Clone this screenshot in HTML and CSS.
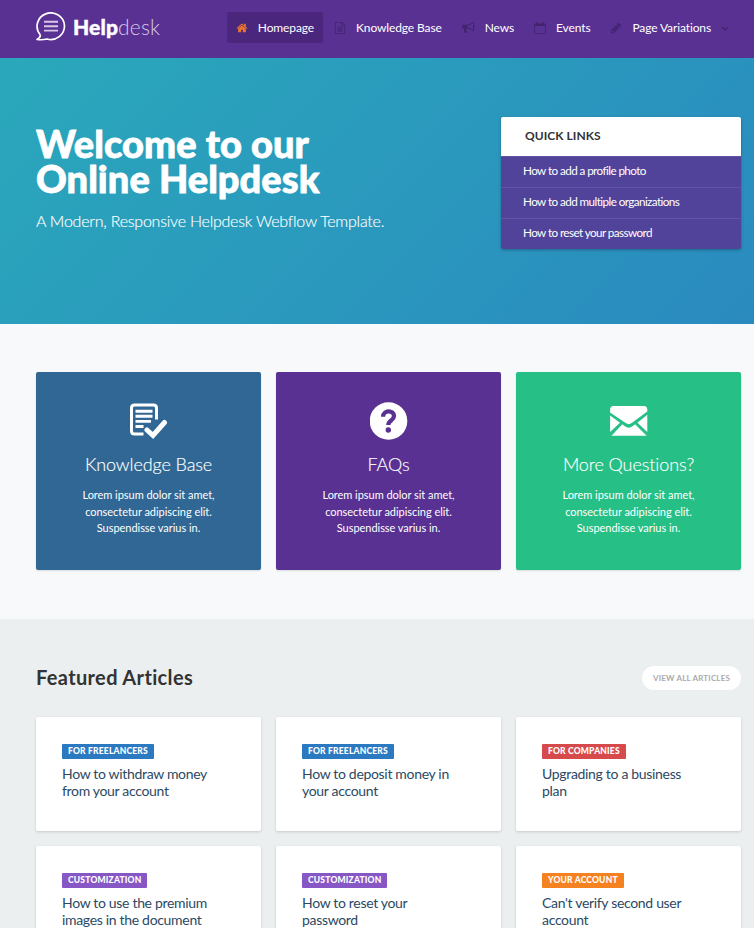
FILE: index.html
```html
<!DOCTYPE html>
<html lang="en">
<head>
<meta charset="utf-8">
<title>Helpdesk</title>
<link rel="stylesheet" href="styles.css">
</head>
<body>
<header class="navbar">
  <a class="logo">
    <svg class="logo-mark" viewBox="0 0 30 30"><path d="M4.300 22.800A13.700 13.300 0 1 1 11 27Q6.500 28.200 1 27.500Q4.700 25.500 4.300 22.800" fill="none" stroke="#fff" stroke-width="1.700" stroke-linejoin="round"/><path d="M8 9.700h14M8 14.200h14M8 18.600h14" stroke="#d6c8e6" stroke-width="1.900"/></svg>
    <span class="logo-text"><b>Help</b>desk</span>
  </a>
  <nav class="menu">
    <a class="menu-link active"><svg viewBox="0 0 1792 1792"><path d="M1472 992v480q0 26-19 45t-45 19h-384v-384h-256v384h-384q-26 0-45-19t-19-45v-480q0-1 .5-3t.5-3l575-474 575 474q1 2 1 6zm223-69l-62 74q-8 9-21 11h-3q-13 0-21-7l-692-577-692 577q-12 8-24 7-13-2-21-11l-62-74q-8-10-7-23.500t11-21.500l719-599q32-26 76-26t76 26l244 204v-195q0-14 9-23t23-9h192q14 0 23 9t9 23v408l219 182q10 8 11 21.500t-7 23.500z"/></svg><span>Homepage</span></a>
    <a class="menu-link"><svg viewBox="0 0 1792 1792"><path d="M1596 380q28 28 48 76t20 88v1152q0 40-28 68t-68 28h-1344q-40 0-68-28t-28-68v-1600q0-40 28-68t68-28h896q40 0 88 20t76 48zm-444-244v376h376q-10-29-22-41l-313-313q-12-12-41-22zm384 1528v-1024h-416q-40 0-68-28t-28-68v-416h-768v1536h1280zm-1024-864q0-14 9-23t23-9h704q14 0 23 9t9 23v64q0 14-9 23t-23 9h-704q-14 0-23-9t-9-23v-64zm736 224q14 0 23 9t9 23v64q0 14-9 23t-23 9h-704q-14 0-23-9t-9-23v-64q0-14 9-23t23-9h704zm0 256q14 0 23 9t9 23v64q0 14-9 23t-23 9h-704q-14 0-23-9t-9-23v-64q0-14 9-23t23-9h704z"/></svg><span>Knowledge Base</span></a>
    <a class="menu-link"><svg class="wide" viewBox="0 0 1792 1792"><path d="M1664 640q53 0 90.500 37.500t37.500 90.500-37.500 90.500-90.500 37.500v384q0 52-38 90t-90 38q-417-347-812-380-58 19-91 66t-31 100.500 40 92.500q-20 33-23 65.500t6 58 33.500 55 48 50 61.500 50.500q-29 58-111.500 83t-168.500 11.500-132-55.500q-7-23-29.500-87.500t-32-94.500-23-89-15-101 3.500-98.500 22-110.500h-122q-66 0-113-47t-47-113v-192q0-66 47-113t113-47h480q435 0 896-384 52 0 90 38t38 90v384zm-128 604v-954q-394 302-768 343v270q377 42 768 341z"/></svg><span>News</span></a>
    <a class="menu-link"><svg viewBox="0 0 12 12"><path fill-rule="evenodd" d="M.8 1.500H2.200V.3H4v1.200h4V.3h1.800v1.200h1.400q.6 0 .6.600v9q0 .6-.6.600H.8q-.6 0-.6-.6v-9q0-.6.600-.6zM1 4v6.900h10V4z"/></svg><span>Events</span></a>
    <a class="menu-link"><svg viewBox="0 0 1792 1792"><path d="M491 1536l91-91-235-235-91 91v107h128v128h107zm523-928q0-22-22-22-10 0-17 7l-542 542q-7 7-7 17 0 22 22 22 10 0 17-7l542-542q7-7 7-17zm-54-192l416 416-832 832h-416v-416zm683 96q0 53-37 90l-166 166-416-416 166-165q36-38 90-38 53 0 91 38l235 234q37 39 37 91z"/></svg><span>Page Variations</span><svg class="chevron" viewBox="0 0 8 6"><path d="M1 1l3 3 3-3" fill="none" stroke="#43246f" stroke-width="1.500"/></svg></a>
  </nav>
</header>

<section class="hero">
  <div class="hero-copy">
    <h1>Welcome to our<br>Online Helpdesk</h1>
    <p>A Modern, Responsive Helpdesk Webflow Template.</p>
  </div>
  <aside class="quick">
    <h2>QUICK LINKS</h2>
    <a>How to add a profile photo</a>
    <a>How to add multiple organizations</a>
    <a>How to reset your password</a>
  </aside>
</section>

<section class="services grid">
  <div class="service blue">
    <svg viewBox="0 0 38 38"><path d="M26.500 17.500V6q0-3-3-3H4.500Q1.500 3 1.500 6v23q0 3 3 3h9" fill="none" stroke="#fff" stroke-width="3"/><path d="M5.500 9.200h17M5.500 14.300h17M5.500 19.400h15.500M5.500 24.500h8" stroke="#fff" stroke-width="2.900"/><path d="M16.500 27.500l6.500 6L34.500 20.500" fill="none" stroke="#306794" stroke-width="8"/><path d="M17 28l6 5.500L34.500 20.500" fill="none" stroke="#fff" stroke-width="5" stroke-linecap="round"/></svg>
    <h3>Knowledge Base</h3>
    <p>Lorem ipsum dolor sit amet,<br>consectetur adipiscing elit.<br>Suspendisse varius in.</p>
  </div>
  <div class="service purple">
    <svg viewBox="0 0 38 38"><circle cx="18.500" cy="19" r="18.800" fill="#fff"/><path d="M13.100 14.700C13.100 7.700 24 7.900 24 14C24 18.200 18.300 18.500 18.300 23" fill="none" stroke="#593193" stroke-width="4.300"/><circle cx="18.300" cy="28" r="2.700" fill="#593193"/></svg>
    <h3>FAQs</h3>
    <p>Lorem ipsum dolor sit amet,<br>consectetur adipiscing elit.<br>Suspendisse varius in.</p>
  </div>
  <div class="service green">
    <svg viewBox="0 0 38 38"><g fill="#fff"><path d="M3.700 4h30q3.600 0 3.600 3.600v1.900L21.700 21q-3 2.300-6 0L.1 10.500V7.600Q.1 4 3.700 4z"/><path d="M.1 13.500L10 20.700.1 30zM37.300 12.700V30L27.400 20.700zM12.300 22.300l2.600 2q3.800 2.700 7.600 0l2.600-2L36.700 33.800H1.500z"/></g></svg>
    <h3>More Questions?</h3>
    <p>Lorem ipsum dolor sit amet,<br>consectetur adipiscing elit.<br>Suspendisse varius in.</p>
  </div>
</section>

<section class="articles">
  <div class="articles-head">
    <h2>Featured Articles</h2>
    <a class="view-all">VIEW ALL ARTICLES</a>
  </div>
  <div class="grid">
    <article><span class="tag t-blue">FOR FREELANCERS</span><h4>How to withdraw money<br>from your account</h4></article>
    <article><span class="tag t-blue">FOR FREELANCERS</span><h4>How to deposit money in<br>your account</h4></article>
    <article><span class="tag t-red">FOR COMPANIES</span><h4>Upgrading to a business<br>plan</h4></article>
    <article><span class="tag t-purple">CUSTOMIZATION</span><h4>How to use the premium<br>images in the document</h4></article>
    <article><span class="tag t-purple">CUSTOMIZATION</span><h4>How to reset your<br>password</h4></article>
    <article><span class="tag t-orange">YOUR ACCOUNT</span><h4>Can't verify second user<br>account</h4></article>
  </div>
</section>
</body>
</html>
```
FILE: styles.css
```css
* { box-sizing: border-box; }
html, body { height: 928px; overflow: hidden; }
body { margin: 0; font-family: Lato, sans-serif; font-size: 12px; color: #333; background: #f8f9fb; }
h1, h2, h3, h4, p { margin: 0; }

.navbar { height: 58px; background: #593193; display: flex; justify-content: space-between; align-items: flex-start; padding: 12px 13px 0 36px; }
.logo { display: flex; gap: 7px; color: #fff; }
.logo-mark { width: 30px; height: 30px; }
.logo-text { font-size: 21px; line-height: 29px; font-weight: 300; color: #d6c8e6; letter-spacing: .15px; }
.logo-text b { font-weight: 900; color: #fff; -webkit-text-stroke: .4px #fff; }
.menu { display: flex; gap: 2px; }
.menu-link { height: 31px; padding: 0 9px; display: flex; align-items: center; color: #fff; font-size: 12px; letter-spacing: -.12px; border-radius: 2px; white-space: nowrap; }
.menu-link svg { width: 12px; height: 12px; margin-right: 10px; fill: #43246f; }
.menu-link svg.wide { width: 13px; height: 13px; }
.menu-link.active { background: #4a267d; }
.menu-link.active svg { fill: #e8752f; }
.menu-link .chevron { width: 8px; height: 6px; margin: 2px 3px 0 10px; }

.hero { height: 266px; background: linear-gradient(135deg, #2aa8bb, #2a8abf); display: flex; justify-content: space-between; align-items: flex-start; padding: 59px 13px 0 36px; color: #fff; }
.hero-copy { padding-top: 9px; }
.hero h1 { font-size: 38px; line-height: 35px; font-weight: 900; letter-spacing: .05px; -webkit-text-stroke: .8px #fff; }
.hero p { font-size: 16px; line-height: 24px; font-weight: 300; letter-spacing: -.23px; margin-top: 13px; -webkit-text-stroke: .15px #fff; }
.quick { width: 240px; border-radius: 2px; overflow: hidden; box-shadow: 0 1px 3px rgba(0,0,0,.3); }
.quick h2 { height: 39px; padding-left: 24px; background: #fff; color: #333; font-size: 12px; line-height: 38px; letter-spacing: .05px; font-weight: 700; }
.quick a { display: block; height: 31px; line-height: 27px; padding-left: 22px; background: #51439a; border-top: 1px solid #6353a4; font-size: 11.700px; letter-spacing: -.58px; }

.grid { display: grid; grid-template-columns: repeat(3, 225px); gap: 15px; }
.services { height: 295px; padding: 48px 0 0 36px; }
.service { height: 198px; border-radius: 2px; padding-top: 30px; color: #fff; text-align: center; box-shadow: 0 1px 2px rgba(0,0,0,.12); }
.service svg { display: block; width: 38px; height: 38px; margin: 0 auto; }
.service h3 { font-size: 18px; line-height: 24px; font-weight: 300; letter-spacing: -.1px; margin-top: 12px; -webkit-text-stroke: .15px #fff; }
.service p { font-size: 11px; line-height: 16.500px; letter-spacing: -.04px; margin-top: 11px; }
.blue { background: #306794; }
.purple { background: #593193; }
.green { background: #26bf86; }

.articles { height: 309px; background: #ebeff0; padding: 47px 13px 0 36px; }
.articles-head { display: flex; justify-content: space-between; margin-bottom: 27px; }
.articles-head h2 { font-size: 20px; line-height: 22px; font-weight: 700; letter-spacing: .35px; color: #333; }
.view-all { width: 99px; height: 24px; border-radius: 12px; background: #fff; color: #aaa; font-size: 8px; line-height: 24px; letter-spacing: .18px; font-weight: 700; text-align: center; }
article { height: 114px; background: #fff; border-radius: 2px; box-shadow: 0 1px 3px rgba(0,0,0,.16); padding: 27px 26px; }
.tag { display: block; width: fit-content; height: 15px; line-height: 15px; padding: 0 6px; border-radius: 1px; color: #fff; font-size: 8.500px; letter-spacing: .2px; font-weight: 900; }
article h4 { font-size: 14px; line-height: 17px; font-weight: 400; letter-spacing: -.32px; color: #2b4963; margin-top: 6px; white-space: nowrap; }
.t-blue { background: #2b79c0; }
.t-red { background: #d64a4c; }
.t-purple { background: #8657c5; }
.t-orange { background: #f58220; }
```
